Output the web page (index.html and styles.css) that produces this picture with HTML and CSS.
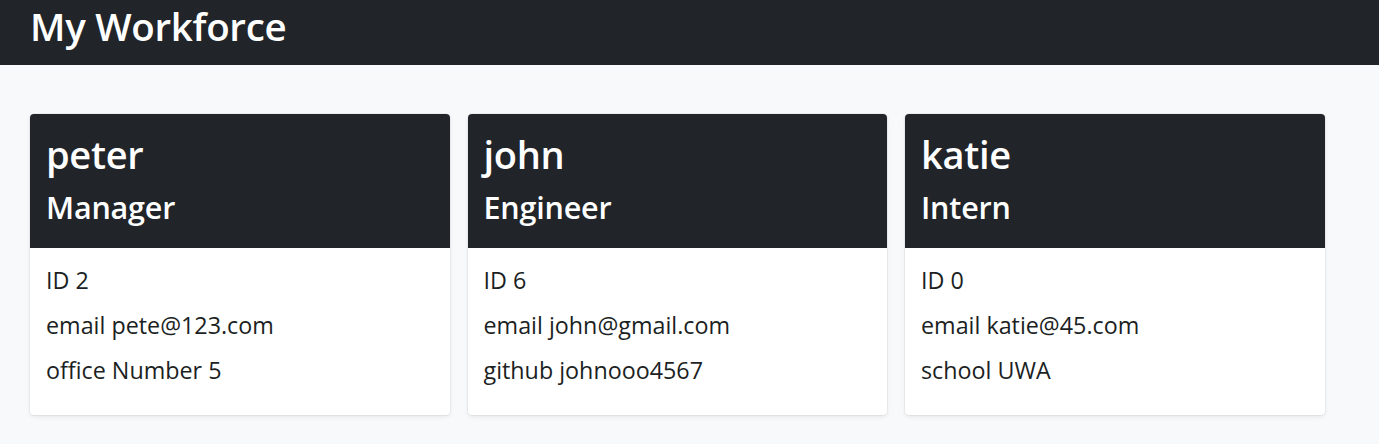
FILE: index.html
```html
<!DOCTYPE html>
<html lang="en">
<head>
<meta charset="utf-8">
<title>My Workforce</title>
<link rel="stylesheet" href="styles.css">
</head>
<body>
<header class="topbar">
  <h1 class="brand">My Workforce</h1>
</header>
<main class="team">
  <article class="card">
    <div class="card-head">
      <h2 class="name">peter</h2>
      <h3 class="role">Manager</h3>
    </div>
    <div class="card-body">
      <p class="field">ID 2</p>
      <p class="field">email pete@123.com</p>
      <p class="field">office Number 5</p>
    </div>
  </article>
  <article class="card">
    <div class="card-head">
      <h2 class="name">john</h2>
      <h3 class="role">Engineer</h3>
    </div>
    <div class="card-body">
      <p class="field">ID 6</p>
      <p class="field">email john@gmail.com</p>
      <p class="field">github johnooo4567</p>
    </div>
  </article>
  <article class="card">
    <div class="card-head">
      <h2 class="name">katie</h2>
      <h3 class="role">Intern</h3>
    </div>
    <div class="card-body">
      <p class="field">ID 0</p>
      <p class="field">email katie@45.com</p>
      <p class="field">school UWA</p>
    </div>
  </article>
</main>
</body>
</html>
```

FILE: styles.css
```css
* { box-sizing: border-box; }

html, body {
  margin: 0;
  padding: 0;
}

body {
  background: #f8f9fa;
  color: #212529;
  font-family: "Open Sans", "Noto Sans", "Liberation Sans", sans-serif;
  height: 444px;
  overflow: hidden;
}

.topbar {
  background: #212529;
  height: 65px;
  padding: 2px 30px 0;
}

.brand {
  margin: 0;
  color: #fff;
  font-size: 38.5px;
  font-weight: 600;
  line-height: 48px;
  letter-spacing: -0.3px;
}

.team {
  display: flex;
  gap: 18px;
  padding: 49px 30px 0;
}

.card {
  width: 419.5px;
  background: #fff;
  border-radius: 4px;
  box-shadow: 0 .125rem .25rem rgba(0, 0, 0, .075), 0 0 0 1px rgba(0, 0, 0, .04);
  overflow: hidden;
}

.card-head {
  background: #212529;
  color: #fff;
  padding: 16px 16px 16px;
  height: 134px;
}

.name {
  margin: 0 0 10px;
  font-size: 38px;
  font-weight: 600;
  line-height: 48px;
  letter-spacing: -0.3px;
}

.role {
  margin: 0;
  font-size: 30.5px;
  font-weight: 600;
  line-height: 38px;
  letter-spacing: -0.2px;
}

.card-body {
  padding: 14px 16px 27px;
  display: flex;
  flex-direction: column;
  gap: 9px;
  height: 167px;
}

.field {
  margin: 0;
  color: #1c1f23;
  font-size: 23.3px;
  line-height: 36px;
}
```
